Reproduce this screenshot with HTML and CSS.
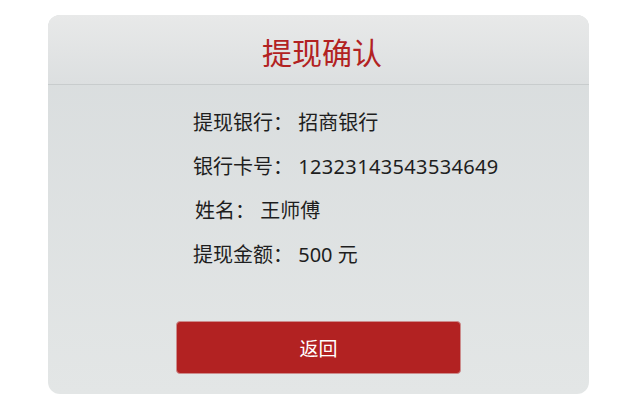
FILE: index.html
```html
<!DOCTYPE html>
<html lang="zh-CN">
<head>
<meta charset="utf-8">
<link rel="stylesheet" href="styles.css">
</head>
<body>
<div class="card">
  <div class="header"><h1 class="title">提现确认</h1></div>
  <div class="body">
    <div class="rows">
      <div class="row">提现银行： 招商银行</div>
      <div class="row">银行卡号： <span class="num">12323143543534649</span></div>
      <div class="row row-name">姓名： 王师傅</div>
      <div class="row">提现金额： 500 元</div>
    </div>
    <button class="btn">返回</button>
  </div>
</div>
</body>
</html>
```
FILE: styles.css
```css
* { box-sizing: border-box; }
html, body { margin: 0; padding: 0; background: #ffffff; }
body {
  font-family: "Noto Sans", "Noto Sans CJK SC", sans-serif;
  width: 640px;
  height: 406px;
  padding: 15px 0 0 48px;
}
.card {
  width: 541px;
  height: 379px;
  border-radius: 12px;
  overflow: hidden;
  display: flex;
  flex-direction: column;
  background: linear-gradient(#d8dcdd, #e3e6e6);
}
.header {
  height: 70px;
  border-bottom: 1px solid #c8cccd;
  background: linear-gradient(#e8e9e9, #dcdfe0);
  display: flex;
  align-items: center;
  justify-content: center;
}
.title {
  margin: 0;
  font-size: 30px;
  font-weight: normal;
  color: #b22222;
  line-height: 1;
  padding: 6px 0 0 7px;
}
.body {
  flex: 1;
  display: flex;
  flex-direction: column;
  padding: 16px 0 0 0;
}
.rows {
  padding-left: 145px;
}
.row {
  height: 44px;
  line-height: 44px;
  font-size: 20px;
  color: #1e1e1e;
  white-space: pre;
}
.num { letter-spacing: 0.35px; }
.row-name { padding-left: 2px; }
.btn {
  margin: 44px 0 0 128px;
  width: 285px;
  height: 53px;
  background: #b22222;
  border: 1px solid #cc8c8c;
  border-radius: 4px;
  color: #fff;
  font-family: "Noto Sans CJK SC", sans-serif;
  font-size: 19px;
  padding: 0;
}
```
